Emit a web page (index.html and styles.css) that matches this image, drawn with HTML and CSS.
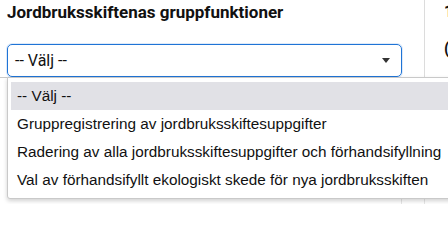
FILE: index.html
```html
<!DOCTYPE html>
<html lang="sv">
<head>
<meta charset="utf-8">
<title>Jordbruksskiften</title>
<link rel="stylesheet" href="styles.css">
</head>
<body>
<div class="page">
  <section class="panel">
    <h2 class="title">Jordbruksskiftenas gruppfunktioner</h2>
    <div class="select">
      <span class="select-value">-- Välj --</span>
      <span class="select-arrow"></span>
    </div>
  </section>
  <aside class="side">
    <span class="side-a">1</span>
    <span class="side-b">(</span>
  </aside>
  <div class="below">
    <div class="cell c1"></div>
    <div class="cell c2"></div>
    <div class="cell c3"></div>
  </div>
  <ul class="menu">
    <li class="opt active">-- Välj --</li>
    <li class="opt">Gruppregistrering av jordbruksskiftesuppgifter</li>
    <li class="opt">Radering av alla jordbruksskiftesuppgifter och förhandsifyllning</li>
    <li class="opt">Val av förhandsifyllt ekologiskt skede för nya jordbruksskiften</li>
  </ul>
</div>
</body>
</html>
```

FILE: styles.css
```css
* { box-sizing: border-box; }
html, body { margin: 0; padding: 0; background: #fff; overflow: hidden; }
body { width: 448px; height: 204px; font-family: Roboto, "Liberation Sans", sans-serif; color: #111; }

.page {
  position: relative;
  display: grid;
  grid-template-columns: 425px 1fr;
  grid-template-rows: 78px 1fr;
  height: 204px;
}

.panel {
  border-right: 1px solid #dcdcdc;
  border-bottom: 1px solid #c8c8c8;
  padding: 2px 22px 0 7px;
}

.title {
  margin: 0;
  font-size: 17px;
  font-weight: 700;
  line-height: 20px;
  color: #111;
  white-space: nowrap;
}

.select {
  margin-top: 22px;
  height: 33px;
  width: 395px;
  border: 1px solid #1f74d6;
  border-radius: 5px;
  box-shadow: 0 0 0 1px rgba(31,116,214,0.15);
  display: flex;
  align-items: center;
  justify-content: space-between;
  padding: 0 11px 0 7px;
  font-size: 16px;
}

.select-arrow {
  width: 0;
  height: 0;
  border-left: 4px solid transparent;
  border-right: 4px solid transparent;
  border-top: 5px solid #333;
}

.side {
  border-bottom: 1px solid #c8c8c8;
  display: flex;
  flex-direction: column;
  gap: 17px;
  padding: 2px 0 0 19px;
  font-weight: 700;
  font-size: 16px;
  line-height: 20px;
}

.below {
  grid-column: 1 / 3;
  display: grid;
  grid-template-columns: 402px 23px 1fr;
}
.cell { border-right: 1px solid #e6e6e6; }
.c3 { border-right: 0; }

.menu {
  position: absolute;
  left: 7px;
  top: 77px;
  width: 470px;
  margin: 0;
  padding: 4px 0 4px 0;
  list-style: none;
  background: #fff;
  border: 1px solid #c9c9c9;
  border-radius: 0 0 3px 3px;
  box-shadow: 0 2px 4px rgba(0,0,0,0.18);
  font-family: "Liberation Sans", Arial, sans-serif;
  font-size: 15.3px;
  color: #111;
}

.opt {
  height: 28px;
  line-height: 28px;
  padding-left: 6px;
  margin-left: 3px;
  white-space: nowrap;
}
.opt.active { background: #e1e1e6; }
```
